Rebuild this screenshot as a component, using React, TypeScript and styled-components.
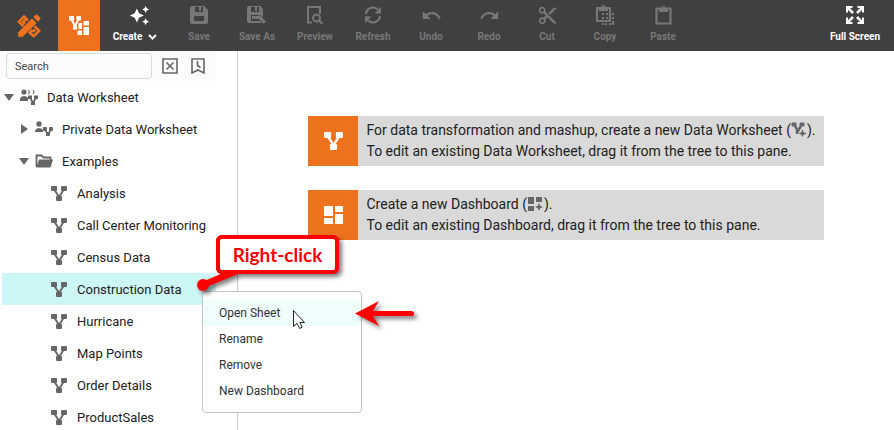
import React from "react";
import styled, { createGlobalStyle } from "styled-components";
import { MdAutoAwesome, MdContentCut, MdUndo, MdRedo } from "react-icons/md";

const ORANGE = "#ee721d";

const GlobalStyle = createGlobalStyle`
  *, *::before, *::after { box-sizing: border-box; }
  body { margin: 0; font-family: Roboto, "Liberation Sans", sans-serif; color: #212121; background: #fff; }
  button, input { font: inherit; color: inherit; }
  ul { list-style: none; margin: 0; padding: 0; }
`;

const Page = styled.div`
  position: relative;
  display: flex;
  flex-direction: column;
  height: 100vh;
  overflow: hidden;
`;

const Toolbar = styled.header`
  display: flex;
  flex: none;
  height: 51px;
  background: #404040;
`;

const BrandButton = styled.button<{ $active?: boolean }>`
  display: flex;
  align-items: center;
  justify-content: center;
  width: ${(p) => (p.$active ? 42 : 58)}px;
  padding: 0;
  border: 0;
  color: ${(p) => (p.$active ? "#fff" : ORANGE)};
  background: ${(p) => (p.$active ? ORANGE : "transparent")};
`;

const ToolIcon = styled.span`
  display: flex;
  align-items: center;
  justify-content: center;
  height: 22px;
  margin-bottom: 4px;
`;

const ToolButton = styled.button<{ $wide?: boolean }>`
  display: flex;
  flex-direction: column;
  align-items: center;
  width: ${(p) => (p.$wide ? 70 : 58)}px;
  padding: 4px 0 0;
  border: 0;
  background: transparent;
  color: #fff;
  font-size: 10px;
  font-weight: 700;
  line-height: 14px;
  white-space: nowrap;
  &:disabled { color: #777; }
  ${ToolIcon} { padding-left: ${(p) => (p.$wide ? 8 : 0)}px; }
`;

const ToolLabel = styled.span`
  display: flex;
  align-items: center;
  gap: 6px;
`;

const Spacer = styled.div`
  flex: 1;
`;

const EndTools = styled.div`
  display: flex;
  padding-right: 10px;
`;

const Body = styled.div`
  display: flex;
  flex: 1;
  min-height: 0;
`;

const Sidebar = styled.aside`
  flex: none;
  width: 238px;
  padding-right: 21px;
  border-right: 1px solid #ccc;
  overflow: hidden;
`;

const SearchBar = styled.div`
  display: flex;
  align-items: center;
  gap: 10px;
  height: 30px;
  padding-left: 6px;
  background: #fbfbfb;
`;

const SearchInput = styled.input`
  width: 146px;
  height: 26px;
  padding: 0 8px;
  border: 1px solid #d9d9d9;
  border-radius: 4px;
  background: #fcfcfc;
  font-size: 11px;
  outline: none;
  &::placeholder { color: #444; opacity: 1; }
`;

const IconButton = styled.button`
  display: flex;
  padding: 0;
  border: 0;
  background: transparent;
  color: #666;
  & + & { margin-left: 2px; }
`;

const Tree = styled.ul`
  padding-left: 2px;
`;

const TreeRow = styled.button<{ $level: number; $selected?: boolean }>`
  display: flex;
  align-items: center;
  width: 100%;
  height: 32px;
  padding: 0 0 0 ${(p) => p.$level * 15}px;
  border: 0;
  background: ${(p) => (p.$selected ? "#cdf6f6" : "transparent")};
  font-size: 13px;
  text-align: left;
  white-space: nowrap;
`;

const ArrowSlot = styled.span`
  display: flex;
  justify-content: center;
  width: 14px;
  margin-right: 4px;
  color: #666;
`;

const NodeIcon = styled.span`
  display: flex;
  align-items: center;
  justify-content: center;
  width: 18px;
  height: 18px;
  margin-right: 9px;
  color: #666;
`;

const Main = styled.main`
  display: grid;
  flex: 1;
  grid-template-columns: max-content;
  gap: 24px;
  align-content: start;
  justify-content: center;
  padding-top: 65px;
`;

const Notice = styled.section`
  display: flex;
  background: #d9d9d9;
`;

const NoticeBadge = styled.div`
  display: flex;
  align-items: center;
  justify-content: center;
  width: 50px;
  height: 50px;
  background: ${ORANGE};
  color: #fff;
`;

const NoticeText = styled.p`
  margin: 0;
  padding: 4px 8px;
  font-size: 14px;
  line-height: 21px;
  svg { vertical-align: -2px; color: #666; }
`;

const ContextMenu = styled.div`
  position: absolute;
  top: 291px;
  left: 202px;
  width: 160px;
  padding: 8px 0;
  border: 1px solid #c4c4c4;
  border-radius: 4px;
  background: #fff;
`;

const MenuItem = styled.button<{ $hover?: boolean }>`
  display: block;
  width: 100%;
  height: 26px;
  padding: 0 16px;
  border: 0;
  background: ${(p) => (p.$hover ? "#effdfd" : "transparent")};
  color: #333;
  font-size: 12px;
  text-align: left;
`;

const Overlay = styled.svg`
  position: absolute;
  top: 0;
  left: 0;
  pointer-events: none;
  filter: drop-shadow(3px 3px 2px rgba(0, 0, 0, 0.5));
`;

const Pointer = styled.svg`
  position: absolute;
  top: 309px;
  left: 292px;
  pointer-events: none;
`;

const Callout = styled.div`
  position: absolute;
  top: 235px;
  left: 216px;
  display: flex;
  align-items: center;
  justify-content: center;
  width: 123px;
  height: 39px;
  border: 4px solid #f00;
  border-radius: 6px;
  background: #fff;
  color: #f00;
  font-family: Lato, "Open Sans", sans-serif;
  font-size: 19px;
  font-weight: 700;
`;

type Glyph = { w: number; h: number; children: React.ReactNode };
const Svg = ({ w, h, children }: Glyph) => (
  <svg width={w} height={h} viewBox={`0 0 ${w} ${h}`} fill="currentColor" aria-hidden="true">{children}</svg>
);

const WorksheetShape = () => (
  <>
    <rect x="0" y="0" width="6" height="5" rx="1" />
    <rect x="10" y="0" width="6" height="5" rx="1" />
    <rect x="5" y="10" width="6" height="5" rx="1" />
    <path d="M3.500 4l4.500 7 4.500-7" fill="none" stroke="currentColor" strokeWidth="2" />
  </>
);
const WorksheetIcon = () => <Svg w={16} h={15}><WorksheetShape /></Svg>;

const LogoIcon = () => (
  <svg width="24" height="24" viewBox="0 0 24 24" fill="none" stroke="currentColor" strokeWidth="2.6" aria-hidden="true">
    <path d="M11 6.500L7 2.500 1.800 7.700l5.400 5.400M8.500 5.500L6 8l2 2" />
    <path d="M15.500 10.500l6.700 6.200-5.500 5.500-6-5.500M13.500 13.500v3.500h3.500l1-1.500" />
    <path d="M0.800 23.200v-5L15 4l5 5L5.800 23.200z" fill="currentColor" stroke="#404040" strokeWidth="0.8" />
    <path d="M16 3l2-2q1.500-1.500 3 0l2 2q1.500 1.500 0 3l-2 2z" fill="currentColor" stroke="#404040" strokeWidth="0.6" />
  </svg>
);

const PortalIcon = () => (
  <Svg w={20} h={20}>
    <path d="M0 0h5v4.500H0zM7.500 0H12v4.500H7.500zM4 9h4v4.500H4zM9.500 7H13v6H9.500zM8.500 14.500H13V19H8.500zM14.500 5H20v4.500h-5.500zM14.500 11H20v8h-5.500z" />
    <path d="M2.500 3.500L6 10l3.500-6.500" fill="none" stroke="currentColor" strokeWidth="2" />
  </Svg>
);

const SaveIcon = () => (
  <Svg w={18} h={18}>
    <path fillRule="evenodd" d="M2 0h12l4 4v12q0 2-2 2H2q-2 0-2-2V2Q0 0 2 0zM5 1v5h8V1h-2v4H9V1zM4 10v5h10v-5z" />
  </Svg>
);
const SaveAsIcon = () => (
  <Svg w={20} h={18}>
    <path fillRule="evenodd" d="M2 0h11l3 3v8.500l-3-2.500H4v6h9l2 2H2q-2 0-2-2V2Q0 0 2 0zM4 1v5h8V1h-2v4H8V1z" />
    <path d="M5 10h6v3H5z" />
    <path d="M10.500 10l2.500-.5 6 6-2.300 2.300-6-5.800z" />
  </Svg>
);
const PreviewIcon = () => (
  <Svg w={18} h={19}>
    <path d="M6 16.500H2V1h12v7" fill="none" stroke="currentColor" strokeWidth="2" />
    <circle cx="10.500" cy="12" r="3.500" fill="none" stroke="currentColor" strokeWidth="2" />
    <path d="M13 14.500l3.500 3.500" stroke="currentColor" strokeWidth="2.200" />
  </Svg>
);
const RefreshIcon = () => (
  <Svg w={18} h={18}>
    <path d="M2 8a7 7 0 0 1 12-4.300M16 10a7 7 0 0 1-12 4.300" fill="none" stroke="currentColor" strokeWidth="2.200" />
    <path d="M17 1v6.500h-6.500zM1 17v-6.500h6.500z" />
  </Svg>
);
const CopyIcon = () => (
  <Svg w={20} h={20}>
    <path d="M15 14V3H2v13h13z" fill="none" stroke="currentColor" strokeWidth="2.200" strokeLinejoin="round" />
    <path fillRule="evenodd" d="M4 6V2h2a2.600 2.600 0 0 1 5 0h2v4zM8.500 1.300a1 1 0 1 0 .1 0z" />
    <path d="M7 8h2v2H7zM11 8h2v2h-2zM17 8h2v2h-2zM7 12h2v2H7zM11 12h2v2h-2zM17 12h2v2h-2zM7 18h2v2H7zM10 18h2v2h-2zM14 18h2v2h-2zM17 16h2v4h-2z" />
  </Svg>
);
const PasteIcon = () => (
  <Svg w={17} h={20}>
    <path d="M1.500 3.500h14v15h-14z" fill="none" stroke="currentColor" strokeWidth="2.200" strokeLinejoin="round" />
    <path fillRule="evenodd" d="M4 7V3h2a2.600 2.600 0 0 1 5 0h2v4zM8.500 1.800a1 1 0 1 0 .1 0z" />
  </Svg>
);
const FullScreenIcon = () => (
  <Svg w={18} h={18}>
    <path d="M0 0h6.500v2H3.800L8 6 6 8 2 3.800v2.700H0zM18 0v6.500h-2V3.800L12 8l-2-2 4.200-4h-2.700V0zM0 18v-6.500h2v2.700L6 10l2 2-4.200 4h2.700v2zM18 18h-6.500v-2h2.700L10 12l2-2 4 4.200v-2.700h2z" />
  </Svg>
);
const ChevronIcon = () => (
  <Svg w={9} h={6}><path d="M1 1l3.500 3.500L8 1" fill="none" stroke="currentColor" strokeWidth="2" /></Svg>
);

const ClearIcon = () => (
  <Svg w={16} h={16}>
    <path d="M1 1h14v14H1zM4.500 4.500l7 7M11.500 4.500l-7 7" fill="none" stroke="currentColor" strokeWidth="1.600" />
  </Svg>
);
const BookmarkIcon = () => (
  <Svg w={16} h={18}>
    <path d="M2 2h12v14l-6-3-6 3zM7.500 4v4.500l3 2" fill="none" stroke="currentColor" strokeWidth="1.600" />
  </Svg>
);

const OpenArrow = () => <Svg w={10} h={7}><path d="M0 0h10L5 7z" /></Svg>;
const ClosedArrow = () => <Svg w={7} h={10}><path d="M0 0l7 5-7 5z" /></Svg>;

const GroupIcon = () => (
  <Svg w={18} h={18}>
    <circle cx="4" cy="4" r="2.600" />
    <path d="M0 13v-2.500Q1 8 4 8q2.500 0 4 1.800V13z" />
    <path d="M8 1.200q4 2.800 0 5.600 1.600-2.800 0-5.600zM12.500 1.200q4 2.800 0 5.600 1.600-2.800 0-5.600z" />
    <path d="M8 7.500h4V11H8zM14 7.500h4V11h-4zM11 13.500h4V17h-4z" />
    <path d="M10 10l3 4.500 3-4.500" fill="none" stroke="currentColor" strokeWidth="1.700" />
  </Svg>
);
const PrivateIcon = () => (
  <Svg w={18} h={18}>
    <circle cx="4" cy="4" r="2.700" />
    <path d="M0 12V10.500Q1 8 4 8q2.500 0 4 2v2z" />
    <rect x="8" y="7" width="4" height="4" rx="1" />
    <rect x="14" y="7" width="4" height="4" rx="1" />
    <rect x="11" y="12" width="4" height="4" rx="1" />
    <path d="M10 10l3 4 3-4" fill="none" stroke="currentColor" strokeWidth="1.700" />
  </Svg>
);
const FolderIcon = () => (
  <Svg w={18} h={18}>
    <path d="M1.500 15V3.500h5l2 2h7V8" fill="none" stroke="currentColor" strokeWidth="1.800" />
    <path d="M4 7.500h14l-2.500 8H1.200z" />
  </Svg>
);

const DashboardIcon = () => (
  <Svg w={19} h={18}>
    <path d="M0 0h9v10H0zM11 0h8v6h-8zM0 12h9v6H0zM11 8h8v10h-8z" />
  </Svg>
);
const NewWorksheetIcon = () => (
  <Svg w={16} h={15}>
    <path d="M1 1h4v3H1zM9 1h4v3H9z" stroke="currentColor" strokeLinejoin="round" />
    <path d="M4 4l3 5 3-5M6 8v4" fill="none" stroke="currentColor" strokeWidth="2.500" />
    <path d="M11.500 7l1.200 3.300L16 11.500l-3.300 1.200-1.200 2.300-1.200-2.300L7.500 11.500l2.800-1.200z" />
  </Svg>
);
const NewDashboardIcon = () => (
  <Svg w={17} h={14}>
    <path d="M1 0h6v7H1zM9 0h6v5H9zM1 9h6v5H1z" />
    <path d="M12 6l1.200 2.800L16 10l-2.800 1.200L12 14l-1.200-2.800L8 10l2.800-1.200z" />
  </Svg>
);

const tools = [
  { label: "Save", icon: <SaveIcon /> },
  { label: "Save As", icon: <SaveAsIcon /> },
  { label: "Preview", icon: <PreviewIcon /> },
  { label: "Refresh", icon: <RefreshIcon /> },
  { label: "Undo", icon: <MdUndo size={21} /> },
  { label: "Redo", icon: <MdRedo size={21} /> },
  { label: "Cut", icon: <MdContentCut size={21} /> },
  { label: "Copy", icon: <CopyIcon /> },
  { label: "Paste", icon: <PasteIcon /> },
];

const sheets = [
  "Analysis", "Call Center Monitoring", "Census Data", "Construction Data",
  "Hurricane", "Map Points", "Order Details", "ProductSales",
];

type NodeProps = { label: string; level: number; icon: React.ReactNode; arrow?: React.ReactNode; selected?: boolean };
const TreeNode = ({ label, level, icon, arrow, selected }: NodeProps) => (
  <li role="none">
    <TreeRow role="treeitem" $level={level} $selected={selected} aria-selected={!!selected}>
      <ArrowSlot>{arrow}</ArrowSlot>
      <NodeIcon>{icon}</NodeIcon>
      {label}
    </TreeRow>
  </li>
);

export default function App() {
  return (
    <>
      <GlobalStyle />
      <Page>
        <Toolbar>
          <BrandButton aria-label="Home"><LogoIcon /></BrandButton>
          <BrandButton $active aria-label="Composer"><PortalIcon /></BrandButton>
          <ToolButton $wide>
            <ToolIcon><MdAutoAwesome size={21} /></ToolIcon>
            <ToolLabel>Create <ChevronIcon /></ToolLabel>
          </ToolButton>
          {tools.map((t) => (
            <ToolButton key={t.label} disabled>
              <ToolIcon>{t.icon}</ToolIcon>
              <ToolLabel>{t.label}</ToolLabel>
            </ToolButton>
          ))}
          <Spacer />
          <EndTools>
            <ToolButton>
              <ToolIcon><FullScreenIcon /></ToolIcon>
              <ToolLabel>Full Screen</ToolLabel>
            </ToolButton>
          </EndTools>
        </Toolbar>
        <Body>
          <Sidebar>
            <SearchBar>
              <SearchInput type="text" placeholder="Search" aria-label="Search" />
              <IconButton aria-label="Clear search"><ClearIcon /></IconButton>
              <IconButton aria-label="Recent"><BookmarkIcon /></IconButton>
            </SearchBar>
            <Tree role="tree">
              <TreeNode label="Data Worksheet" level={0} icon={<GroupIcon />} arrow={<OpenArrow />} />
              <TreeNode label="Private Data Worksheet" level={1} icon={<PrivateIcon />} arrow={<ClosedArrow />} />
              <TreeNode label="Examples" level={1} icon={<FolderIcon />} arrow={<OpenArrow />} />
              {sheets.map((s) => (
                <TreeNode key={s} label={s} level={2} icon={<WorksheetIcon />} selected={s === "Construction Data"} />
              ))}
            </Tree>
          </Sidebar>
          <Main>
            <Notice>
              <NoticeBadge>
                <svg width="19" height="18" viewBox="0 0 16 15" fill="currentColor" aria-hidden="true"><WorksheetShape /></svg>
              </NoticeBadge>
              <NoticeText>
                For data transformation and mashup, create a new Data Worksheet (<NewWorksheetIcon />).<br />
                To edit an existing Data Worksheet, drag it from the tree to this pane.
              </NoticeText>
            </Notice>
            <Notice>
              <NoticeBadge><DashboardIcon /></NoticeBadge>
              <NoticeText>
                Create a new Dashboard (<NewDashboardIcon />).<br />
                To edit an existing Dashboard, drag it from the tree to this pane.
              </NoticeText>
            </Notice>
          </Main>
        </Body>
        <ContextMenu role="menu">
          <MenuItem role="menuitem" $hover>Open Sheet</MenuItem>
          <MenuItem role="menuitem">Rename</MenuItem>
          <MenuItem role="menuitem">Remove</MenuItem>
          <MenuItem role="menuitem">New Dashboard</MenuItem>
        </ContextMenu>
        <Pointer width="15" height="22" viewBox="0 0 15 22" aria-hidden="true">
          <path d="M1.500 1.500v16l3.500-3.200 2.700 5.200 2.500-1.300-2.400-4.700h4.700z" fill="#fff" stroke="#222" />
        </Pointer>
        <Overlay width="430" height="350" viewBox="0 0 430 350" aria-hidden="true">
          <rect x="216" y="235" width="123" height="39" rx="6" fill="#f00" />
          <path d="M202 282l28-12h18l-44 18z" fill="#f00" />
          <circle cx="203" cy="285" r="6" fill="#f00" />
          <path d="M355 313.500l24-12.500-6 10h38.500a2.500 2.500 0 0 1 0 5H373l6 10z" fill="#f00" />
        </Overlay>
        <Callout>Right-click</Callout>
      </Page>
    </>
  );
}
